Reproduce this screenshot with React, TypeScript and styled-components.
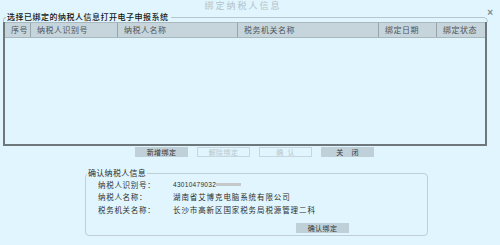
import React from 'react';
import styled, { createGlobalStyle } from 'styled-components';

const GlobalStyle = createGlobalStyle`
  html, body {
    margin: 0;
    padding: 0;
    background: #e0f5fd;
  }
  body {
    font-family: 'Noto Sans CJK SC', 'Liberation Sans', sans-serif;
    color: #2b2b2b;
  }
`;

type ButtonProps = {
  $disabled?: boolean;
};

const columns = [
  { id: 1, label: '序号' },
  { id: 2, label: '纳税人识别号' },
  { id: 3, label: '纳税人名称' },
  { id: 4, label: '税务机关名称' },
  { id: 5, label: '绑定日期' },
  { id: 6, label: '绑定状态' }
];

const actions = [
  { id: 1, label: '新增绑定', disabled: false },
  { id: 2, label: '解除绑定', disabled: true },
  { id: 3, label: '确  认', disabled: true },
  { id: 4, label: '关    闭', disabled: false }
];

const App = () => {
  return (
    <Window>
      <GlobalStyle />
      <TitleBar>
        <Title>绑定纳税人信息</Title>
        <CloseBtn>×</CloseBtn>
      </TitleBar>

      <ListGroup>
        <GroupHead>
          <CornerLeft />
          <ListLegend>选择已绑定的纳税人信息打开电子申报系统</ListLegend>
          <CornerRight />
        </GroupHead>
        <Table>
          <HeaderRow>
            {columns.map((col) => (
              <HeaderCell key={col.id}>{col.label}</HeaderCell>
            ))}
          </HeaderRow>
          <TableBody />
        </Table>
      </ListGroup>

      <ButtonRow>
        {actions.map((action) => (
          <ActionBtn key={action.id} $disabled={action.disabled}>
            {action.label}
          </ActionBtn>
        ))}
      </ButtonRow>

      <ConfirmGroup>
        <ConfirmLegend>确认纳税人信息</ConfirmLegend>
        <InfoGrid>
          <Label>纳税人识别号：</Label>
          <Value>
            <TaxNo>43010479032</TaxNo>
            <Masked />
          </Value>
          <Label>纳税人名称：</Label>
          <Value>湖南省艾博克电脑系统有限公司</Value>
          <Label>税务机关名称：</Label>
          <Value>长沙市高新区国家税务局税源管理二科</Value>
        </InfoGrid>
        <ConfirmFooter>
          <ActionBtn>确认绑定</ActionBtn>
        </ConfirmFooter>
      </ConfirmGroup>
    </Window>
  );
};

export default App;

const Window = styled.div`
  position: relative;
  display: flex;
  flex-direction: column;
  width: 500px;
  height: 245px;
  background: #e0f5fd;
  overflow: hidden;
`;
/* 标题 */
const TitleBar = styled.div`
  display: flex;
  align-items: center;
  height: 12px;
`;
const Title = styled.div`
  flex: 1;
  text-align: center;
  font-size: 9px;
  line-height: 12px;
  letter-spacing: 2px;
  color: #b3c3cb;
  padding-right: 14px;
`;
const CloseBtn = styled.div`
  position: absolute;
  top: 8px;
  right: 7px;
  font-family: 'Liberation Sans', sans-serif;
  font-size: 10px;
  font-weight: bold;
  line-height: 10px;
  color: #7d8a90;
`;
/* 列表 */
const ListGroup = styled.div`
  display: flex;
  flex-direction: column;
  margin-left: 3px;
  width: 485px;
`;
const GroupHead = styled.div`
  display: flex;
  height: 10px;
`;
const CornerLeft = styled.div`
  align-self: flex-end;
  width: 3px;
  height: 5px;
  box-sizing: border-box;
  border-top: 1px solid #b6c6ce;
  border-left: 1px solid #b6c6ce;
  border-top-left-radius: 4px;
`;
const CornerRight = styled.div`
  align-self: flex-end;
  flex: 1;
  height: 5px;
  box-sizing: border-box;
  border-top: 1px solid #b6c6ce;
  border-right: 1px solid #b6c6ce;
  border-top-right-radius: 5px;
`;
const ListLegend = styled.div`
  padding: 0 2px 0 1px;
  font-size: 8px;
  line-height: 10px;
  font-weight: 500;
  letter-spacing: 0.5px;
  color: #151515;
  white-space: nowrap;
`;
const Table = styled.div`
  display: flex;
  flex-direction: column;
  width: 484px;
  height: 124px;
  box-sizing: border-box;
  border-left: 2px solid #6e777b;
  border-right: 2px solid #6e777b;
  border-bottom: 2px solid #6e777b;
`;
const HeaderRow = styled.div`
  display: grid;
  grid-template-columns: 26px 87px 120px 141px 58px 1fr;
  height: 14px;
  background: #c6d5dc;
  border-top: 1px solid #a9b8bf;
  border-bottom: 1px solid #a9b8bf;
`;
const HeaderCell = styled.div`
  padding-left: 6px;
  font-size: 8px;
  line-height: 14px;
  letter-spacing: 0.5px;
  color: #4e5458;
  white-space: nowrap;
  border-right: 1px solid #97a5ab;
  &:last-child {
    border-right: none;
  }
`;
const TableBody = styled.div`
  flex: 1;
  background: #e0f5fd;
`;
/* 按钮 */
const ButtonRow = styled.div`
  display: flex;
  justify-content: center;
  gap: 9px;
  margin-top: 1px;
  padding-left: 9px;
`;
const ActionBtn = styled.div<ButtonProps>`
  display: flex;
  justify-content: center;
  align-items: center;
  width: 53px;
  height: 10px;
  box-sizing: border-box;
  font-size: 7px;
  line-height: 10px;
  white-space: pre;
  letter-spacing: 0.4px;
  border: 1px solid ${(props) => (props.$disabled ? '#c7d7df' : '#c0d0d8')};
  background: ${(props) => (props.$disabled ? 'transparent' : '#c0d0d8')};
  color: ${(props) => (props.$disabled ? '#b6c6ce' : '#333')};
`;
/* 确认信息 */
const ConfirmGroup = styled.fieldset`
  margin: 11px 0 0 85px;
  padding: 0 0 2px 0;
  width: 343px;
  height: 68px;
  box-sizing: border-box;
  min-width: 0;
  border: 1px solid #c0cfd6;
  border-radius: 4px;
`;
const ConfirmLegend = styled.legend`
  padding: 0 1px;
  margin-left: 1px;
  font-size: 8px;
  line-height: 10px;
  letter-spacing: 0.3px;
  color: #2a2a2a;
`;
const InfoGrid = styled.div`
  display: grid;
  grid-template-columns: 75px 1fr;
  grid-auto-rows: 12.5px;
  align-items: center;
  padding-left: 12px;
`;
const Label = styled.div`
  font-size: 7.5px;
  letter-spacing: 0.7px;
  color: #2e2e2e;
  white-space: nowrap;
`;
const Value = styled.div`
  display: flex;
  align-items: center;
  font-size: 7.5px;
  letter-spacing: 0.9px;
  color: #2e2e2e;
  white-space: nowrap;
`;
const TaxNo = styled.span`
  font-family: 'Liberation Sans', sans-serif;
  font-size: 6.5px;
  letter-spacing: 0.3px;
`;
const Masked = styled.span`
  display: inline-block;
  width: 25px;
  height: 3px;
  background: #c4c8ca;
`;
const ConfirmFooter = styled.div`
  display: flex;
  padding-left: 210px;
  margin-top: 7px;
`;
